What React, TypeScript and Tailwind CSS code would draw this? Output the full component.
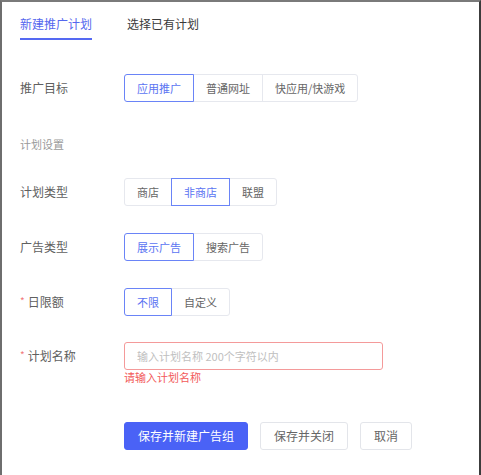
import React, { useState } from "react";

const font = { fontFamily: '"Noto Sans CJK SC", "Noto Sans", sans-serif' };

type GroupProps = { options: string[]; value: string };

function Group({ options, value }: GroupProps) {
  return (
    <div className="flex">
      {options.map((o, i) => {
        const active = o === value;
        return (
          <div
            key={o}
            className={
              "relative h-[28px] px-[12px] flex items-center text-[11px] leading-none border " +
              (i === 0 ? "rounded-l-[3px] " : "-ml-px ") +
              (i === options.length - 1 ? "rounded-r-[3px] " : "") +
              (active
                ? "z-10 border-[#6a84f7] text-[#5b74f2]"
                : "border-[#e6e8ee] text-[#666]")
            }
          >
            {o}
          </div>
        );
      })}
    </div>
  );
}

function Row({
  label,
  required,
  children,
  className,
}: {
  label: string;
  required?: boolean;
  children: React.ReactNode;
  className?: string;
}) {
  return (
    <div className={"flex items-center " + (className ?? "")}>
      <div className="w-[104px] flex items-center text-[12px] text-[#606060] leading-none">
        {required && <span className="text-[#f27a7a] mr-[3px] text-[10px] -mt-[3px]">*</span>}
        <span>{label}</span>
      </div>
      {children}
    </div>
  );
}

export default function App() {
  const [tab] = useState(0);
  return (
    <div
      className="w-[481px] h-[475px] bg-white border-l-2 border-t-2 border-r-2 border-l-[#6e6e6e] border-t-[#7a7a7a] border-r-[#3c3c3c] pl-[18px] overflow-hidden"
      style={font}
    >
      <div className="flex gap-[35px] pt-[14px]">
        <div
          className={
            "text-[12px] leading-[16px] pb-[6px] border-b-2 " +
            (tab === 0 ? "border-[#5569f2] text-[#5567ee]" : "border-transparent text-[#333]")
          }
        >
          新建推广计划
        </div>
        <div className="text-[12px] leading-[16px] pb-[6px] border-b-2 border-transparent text-[#3a3a3a]">
          选择已有计划
        </div>
      </div>

      <Row label="推广目标" className="mt-[34px]">
        <Group options={["应用推广", "普通网址", "快应用/快游戏"]} value="应用推广" />
      </Row>

      <div className="mt-[34px] text-[11px] leading-[16px] text-[#9a9a9a]">计划设置</div>

      <Row label="计划类型" className="mt-[26px]">
        <Group options={["商店", "非商店", "联盟"]} value="非商店" />
      </Row>

      <Row label="广告类型" className="mt-[27px]">
        <Group options={["展示广告", "搜索广告"]} value="展示广告" />
      </Row>

      <Row label="日限额" required className="mt-[27px]">
        <Group options={["不限", "自定义"]} value="不限" />
      </Row>

      <Row label="计划名称" required className="mt-[26px]">
        <input
          className="w-[259px] h-[28px] border border-[#f49a9a] rounded-[3px] px-[12px] text-[11px] outline-none placeholder:text-[#c0c0c0]"
          style={font}
          placeholder="输入计划名称 200个字符以内"
        />
      </Row>
      <div className="pl-[104px] text-[11px] leading-[14px] text-[#f25a5a]">请输入计划名称</div>

      <div className="pl-[104px] mt-[38px] flex gap-[12px]">
        <button className="h-[28px] px-[13px] border border-[#4a62f6] bg-[#4a62f6] text-white text-[12px] rounded-[3px] leading-none">
          保存并新建广告组
        </button>
        <button className="h-[28px] px-[13px] border border-[#e3e5ea] bg-white text-[#666] text-[12px] rounded-[3px] leading-none">
          保存并关闭
        </button>
        <button className="h-[28px] px-[13px] border border-[#e3e5ea] bg-white text-[#666] text-[12px] rounded-[3px] leading-none">
          取消
        </button>
      </div>
    </div>
  );
}
